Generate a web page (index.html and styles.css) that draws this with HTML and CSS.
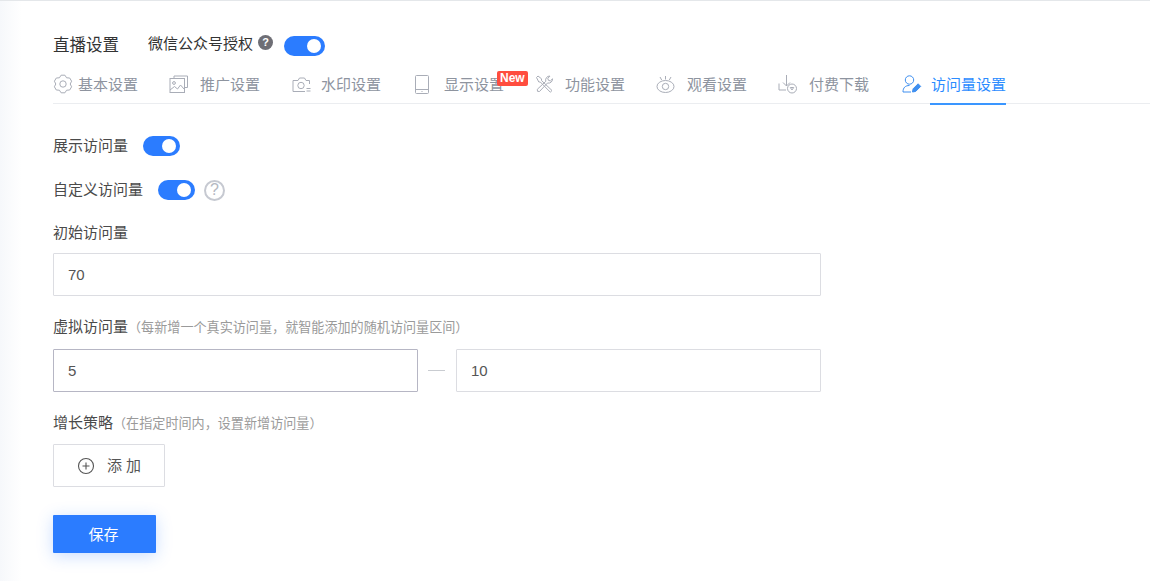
FILE: index.html
```html
<!DOCTYPE html>
<html lang="zh-CN">
<head>
<meta charset="utf-8">
<title>直播设置</title>
<link rel="stylesheet" href="styles.css">
</head>
<body>
<main class="page">
  <header class="head">
    <h1 class="title">直播设置</h1>
    <span class="auth">微信公众号授权</span>
    <span class="help-dot">?</span>
    <span class="switch switch-head"></span>
  </header>
  <nav class="tabs">
    <a class="tab t1">
      <svg class="ico" viewBox="0 0 20 20"><path d="M8.100 1.200h3.800l1.700 2.600 3.100.2 1.900 3.200-1.400 2.800 1.400 2.800-1.900 3.200-3.100.2-1.700 2.600H8.100l-1.700-2.600-3.100-.2-1.900-3.200L2.800 10 1.400 7.200 3.300 4l3.100-.2z"/><circle cx="10" cy="10" r="3.200"/></svg>
      <span>基本设置</span>
    </a>
    <a class="tab t2">
      <svg class="ico" viewBox="0 0 20 20"><path d="M5 4.500V2h13.500v11.500H15.500"/><rect x="1" y="4.500" width="14.500" height="14"/><circle cx="5" cy="9" r="1.400"/><path d="M1 16l4.500-3.500 3 2.500 3-4 4 4.500"/></svg>
      <span>推广设置</span>
    </a>
    <a class="tab t3">
      <svg class="ico" viewBox="0 0 20 20"><path d="M17.500 10V6.500H14L12.500 4h-5L6 6.500H1v11h12"/><circle cx="9" cy="11.500" r="3.200"/><path d="M14.500 14.500h4M14.500 17h4"/></svg>
      <span>水印设置</span>
    </a>
    <a class="tab t4">
      <svg class="ico" viewBox="0 0 20 20"><rect x="1.500" y="1.500" width="13" height="18" rx="1"/><path d="M1.500 15.500h13M7.500 17.500h1"/></svg>
      <span>显示设置</span>
      <em class="badge">New</em>
    </a>
    <a class="tab t5">
      <svg class="ico" viewBox="0 0 20 20"><path d="M1.500 3.500L3 2l3.500 2.800v1.700l10.500 10-1.700 1.700L5.300 8H3.800z"/><path d="M17.500 4.800a4 4 0 0 1-5 4.200l-8 8.500-2-.2-.2-2 8.500-8a4 4 0 0 1 4.200-5.200L12.800 4.300l.6 2 2 .6z"/></svg>
      <span>功能设置</span>
    </a>
    <a class="tab t6">
      <svg class="ico" viewBox="0 0 20 20"><ellipse cx="9.500" cy="12.500" rx="8.500" ry="6"/><circle cx="9.500" cy="12.500" r="3.200"/><path d="M9.500 2v3.500M4 3l1.700 3M15 3l-1.700 3"/></svg>
      <span>观看设置</span>
    </a>
    <a class="tab t7">
      <svg class="ico" viewBox="0 0 20 20"><path d="M8.500 1v11M5 8.500L8.500 12 12 8.500M1 9.500V16h7"/><circle cx="14" cy="14.500" r="4.500"/><path d="M12.300 13.500h3.400L14 16z"/></svg>
      <span>付费下载</span>
    </a>
    <a class="tab tab-active">
      <svg class="ico" viewBox="0 0 20 20"><circle cx="7.500" cy="6" r="4.200"/><path d="M1 18c0-4.300 2.300-6.500 6.500-6.500M1 18h8"/><path class="pen" d="M10.500 18l.6-3.200 5-5 2.600 2.600-5 5z"/></svg>
      <span>访问量设置</span>
    </a>
  </nav>

  <form class="form">
    <div class="row row-show">
      <label class="label">展示访问量</label>
      <span class="switch"></span>
    </div>
    <div class="row row-custom">
      <label class="label">自定义访问量</label>
      <span class="switch"></span>
      <span class="help-ring">?</span>
    </div>
    <div class="field-init">
      <label class="label">初始访问量</label>
      <div class="input">70</div>
    </div>
    <div class="field-virtual">
      <label class="label">虚拟访问量<small class="hint">（每新增一个真实访问量，就智能添加的随机访问量区间）</small></label>
      <div class="range">
        <div class="input input-focus">5</div>
        <span class="dash"></span>
        <div class="input">10</div>
      </div>
    </div>
    <div class="field-growth">
      <label class="label">增长策略<small class="hint">（在指定时间内，设置新增访问量）</small></label>
      <button type="button" class="add">
        <svg class="add-ico" viewBox="0 0 18 18"><circle cx="9" cy="9" r="7.500"/><path d="M5.500 9h7M9 5.500v7"/></svg>
        <span>添 加</span>
      </button>
    </div>
    <button type="button" class="save">保存</button>
  </form>
</main>
</body>
</html>
```
FILE: styles.css
```css
* { box-sizing: border-box; }
html, body { margin: 0; height: 100%; overflow: hidden; }
body {
  font-family: "Liberation Sans", "Noto Sans CJK SC", sans-serif;
  font-size: 15px;
  color: #4a4a4a;
  background: #fff;
}
.page {
  height: 581px;
  padding: 0 0 0 53px;
  border-top: 1px solid #e4e7ea;
  background: linear-gradient(to right, #f6f8fb 0, #fff 22px);
}
.head { display: flex; align-items: center; height: 60px; padding-top: 28px; }
.title { margin: 0 29px 0 0; font-size: 16.500px; font-weight: 400; color: #333; line-height: 32px; }
.auth { color: #333; font-size: 15px; margin-bottom: 6px; }
.help-dot {
  width: 15px; height: 15px; margin: 0 11px 6px 5px; border-radius: 50%;
  background: #6e6e75; color: #fff; font-size: 11px; font-weight: 700;
  display: flex; align-items: center; justify-content: center;
}
.switch {
  position: relative; display: inline-block; width: 37px; height: 20px;
  border-radius: 10px; background: #2b7cff; flex: none;
}
.switch::after {
  content: ""; position: absolute; top: 3px; right: 4px; width: 14px; height: 14px;
  border-radius: 50%; background: #fff;
}
.switch-head { width: 41px; margin-top: 2px; }
.tabs { display: flex; height: 43px; border-bottom: 1px solid #ebedf0; }
.tab {
  display: flex; align-items: center; height: 43px; padding-top: 2px;
  color: #8e949f; font-size: 15px; position: relative; white-space: nowrap;
}
.ico { width: 20px; height: 20px; fill: none; stroke: #a9adb7; stroke-width: 1; flex: none; }
.t1 { width: 116px; }
.t1 .ico { margin-right: 5px; }
.t2 { width: 123px; }
.t2 .ico { margin-right: 11px; }
.t3 { width: 122px; }
.t3 .ico { margin-right: 9px; }
.t4 { width: 121px; }
.t4 .ico { margin-right: 10px; }
.t5 { width: 121px; }
.t5 .ico { margin-right: 10px; }
.t6 { width: 122px; }
.t6 .ico { margin-right: 11px; }
.t7 { width: 124px; }
.t7 .ico { margin-right: 11px; }
.badge {
  position: absolute; left: 83px; top: 10px; height: 15px; padding: 0 3px;
  background: #ff4d3f; color: #fff; font-size: 12px; font-weight: 700; font-style: normal;
  line-height: 14px; border-radius: 2px;
}
.tab-active { color: #2b8cff; }
.tab-active .ico { margin-right: 9px; stroke: #3e8ff0; }
.tab-active .pen { fill: #3e8ff0; }
.tab-active::after {
  content: ""; position: absolute; left: 28px; right: 0; bottom: -1px; height: 2px; background: #3a96ff;
}
.form { width: 768px; }
.label { color: #4a4a4a; font-size: 15px; line-height: 20px; display: block; }
.row { display: flex; align-items: center; height: 20px; }
.row .label { margin-right: 15px; }
.row-show { margin-top: 32px; }
.row-custom { margin-top: 24px; }
.help-ring {
  width: 21px; height: 21px; margin-left: 9px; border: 2px solid #c6c9d1; border-radius: 50%;
  color: #b4b8c2; font-size: 16px; display: flex; align-items: center; justify-content: center;
}
.field-init { margin-top: 23px; }
.input {
  height: 43px; margin-top: 10px; padding-left: 14px; border: 1px solid #dcdde2; border-radius: 1px;
  background: #fff; color: #555; font-size: 15px; line-height: 41px;
}
.field-virtual { margin-top: 21px; }
.hint { color: #9a9a9a; font-size: 13.100px; }
.range { display: flex; align-items: flex-start; margin-top: 11px; }
.range .input { flex: 1; margin-top: 0; }
.input-focus { border-color: #b6b6c4; }
.dash { width: 17px; height: 1px; margin: 21px 11px 0 10px; background: #c9ccd1; flex: none; }
.field-growth { margin-top: 21px; }
.add {
  display: flex; align-items: center; justify-content: center; gap: 12px;
  width: 112px; height: 43px; margin-top: 10px; border: 1px solid #dcdde2; border-radius: 1px;
  background: #fff; color: #555; font: inherit; padding: 0 0 2px;
}
.add-ico { width: 18px; height: 18px; fill: none; stroke: #555; stroke-width: 1.100; margin-top: 2px; }
.save {
  display: block; width: 103px; height: 38px; margin-top: 28px; border: 0; border-radius: 1px; padding: 0 2px 2px 0;
  background: #2b7cff; color: #fff; font: inherit; box-shadow: 0 3px 16px rgba(43,124,255,.25);
}
```
